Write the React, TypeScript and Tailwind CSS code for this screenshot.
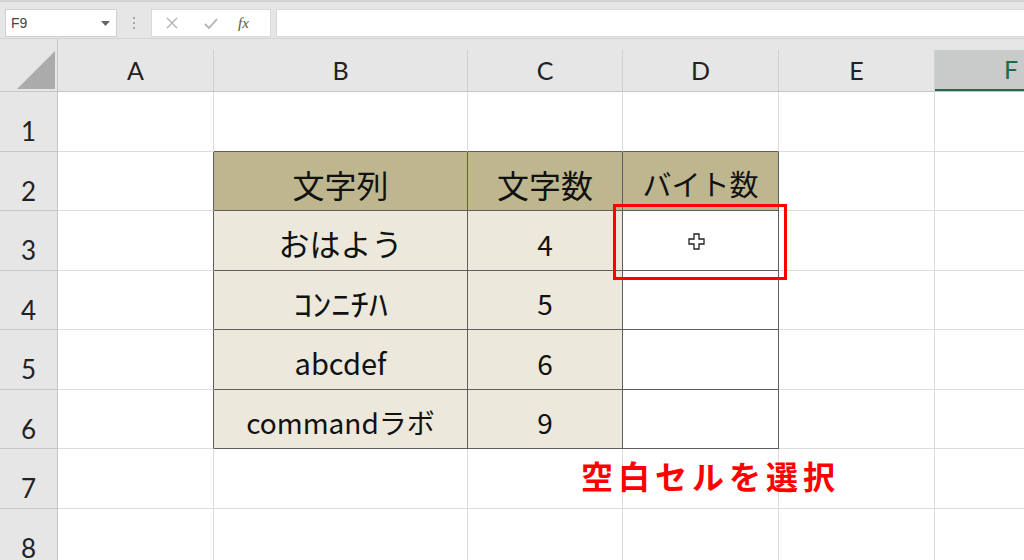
import React from "react";

const colWidths = [156, 254, 155, 156, 156, 152];
const colNames = ["A", "B", "C", "D", "E", "F"];
const rowHeights = [60, 59, 60, 59, 60, 59, 60, 60];

type Cell = { text?: string; kind?: "head" | "body" | "white"; size?: string; wide?: boolean };

const table: Record<string, Cell> = {
  "2-1": { text: "文字列", kind: "head", size: "text-[32px]" },
  "2-2": { text: "文字数", kind: "head", size: "text-[32px]" },
  "2-3": { text: "バイト数", kind: "head", size: "text-[29px]" },
  "3-1": { text: "おはよう", kind: "body", size: "text-[31px]" },
  "3-2": { text: "4", kind: "body" },
  "3-3": { kind: "white" },
  "4-1": { text: "ｺﾝﾆﾁﾊ", kind: "body", size: "text-[31px]", wide: true },
  "4-2": { text: "5", kind: "body" },
  "4-3": { kind: "white" },
  "5-1": { text: "abcdef", kind: "body", size: "text-[29px]" },
  "5-2": { text: "6", kind: "body" },
  "5-3": { kind: "white" },
  "6-1": { text: "commandラボ", kind: "body" },
  "6-2": { text: "9", kind: "body" },
  "6-3": { kind: "white" },
};

export default function App() {
  const font = { fontFamily: '"Noto Sans CJK JP", "Noto Sans", sans-serif' };
  return (
    <div className="relative w-[1024px] h-[560px] overflow-hidden bg-white" style={font}>
      {/* top strip */}
      <div className="h-[2px] bg-[#d2d2d2]" />
      {/* formula bar */}
      <div className="flex items-start pt-[7px] h-[37px] bg-[#e6e6e6] border-b border-[#d4d4d4]">
        <div className="ml-[5px] w-[112px] h-[28px] bg-white border border-[#d0d0d0] flex items-center justify-between pl-[5px] pr-[6px]">
          <span className="text-[14px] text-[#444]" style={{ fontFamily: '"Liberation Sans", sans-serif' }}>F9</span>
          <svg width="9" height="5" viewBox="0 0 9 5"><path d="M0 0 L9 0 L4.5 5 Z" fill="#666" /></svg>
        </div>
        <div className="w-[34px] h-[28px] flex flex-col items-center justify-center gap-[3px]">
          <div className="w-[2px] h-[2px] bg-[#a6a6a6]" />
          <div className="w-[2px] h-[2px] bg-[#a6a6a6]" />
          <div className="w-[2px] h-[2px] bg-[#a6a6a6]" />
        </div>
        <div className="w-[120px] h-[28px] bg-white border border-[#d8d8d8] flex items-center">
          <svg className="ml-[14px]" width="12" height="12" viewBox="0 0 12 12"><path d="M1 1 L11 11 M11 1 L1 11" stroke="#b3b3b3" strokeWidth="1.4" /></svg>
          <svg className="ml-[26px]" width="14" height="11" viewBox="0 0 14 11"><path d="M1 6 L5 10 L13 1" stroke="#b3b3b3" strokeWidth="1.8" fill="none" /></svg>
          <span className="ml-[20px] text-[15px] italic text-[#555]" style={{ fontFamily: '"Liberation Serif", serif' }}>fx</span>
        </div>
        <div className="ml-[5px] flex-1 h-[28px] bg-white border-l border-y border-[#d8d8d8]" />
      </div>
      {/* column header */}
      <div className="flex h-[53px] bg-[#e6e6e6] border-b border-[#c6c6c6]">
        <div className="w-[58px] shrink-0 h-full relative border-r border-[#c6c6c6]">
          <svg className="absolute right-[2px] bottom-[2px]" width="38" height="38" viewBox="0 0 38 38"><path d="M38 0 L38 38 L0 38 Z" fill="#ababab" /></svg>
        </div>
        {colNames.map((c, i) => (
          <div
            key={c}
            className={
              c === "F"
                ? "shrink-0 mt-[11px] flex items-center justify-center bg-[#c9cbca] border-b-2 border-[#1f6b45] text-[#1f6b45] text-[25px]"
                : "shrink-0 mt-[11px] flex items-center justify-center border-r border-[#d0d0d0] text-[#222] text-[25px]"
            }
            style={{ width: colWidths[i], fontFamily: 'Lato, "Noto Sans", sans-serif' }}
          >
            {c}
          </div>
        ))}
      </div>
      {/* rows */}
      {rowHeights.map((h, r) => {
        const row = r + 1;
        return (
          <div key={row} className="flex" style={{ height: h }}>
            <div
              className="w-[58px] shrink-0 bg-[#e6e6e6] border-r border-b border-[#c6c6c6] flex items-center justify-center pt-[20px] text-[26px] text-[#222]"
              style={{ fontFamily: 'Lato, "Noto Sans", sans-serif' }}
            >
              {row}
            </div>
            {colWidths.map((w, c) => {
              const cell = table[`${row}-${c}`];
              const inTable = row >= 2 && row <= 6;
              const darkRight = inTable && c >= 0 && c <= 3;
              const darkBottom = row >= 1 && row <= 6 && c >= 1 && c <= 3;
              const bg =
                cell?.kind === "head"
                  ? "bg-[#bdb68f]"
                  : cell?.kind === "body"
                  ? "bg-[#ece8dc]"
                  : "bg-white";
              return (
                <div
                  key={c}
                  className={`shrink-0 flex items-center justify-center pt-[6px] ${cell?.size ?? "text-[28px]"} text-[#111] border-r border-b ${bg} ${
                    darkRight ? "border-r-[#5e5e5e]" : "border-r-[#dcdcdc]"
                  } ${darkBottom ? "border-b-[#5e5e5e]" : "border-b-[#dcdcdc]"}`}
                  style={{ width: w }}
                >
                  {cell?.text && (
                    <span className={cell.wide ? "inline-block scale-x-[1.22]" : ""}>{cell.text}</span>
                  )}
                </div>
              );
            })}
          </div>
        );
      })}
      {/* selection box */}
      <div className="absolute left-[613px] top-[204px] w-[174px] h-[76px] border-[3px] border-[#ff0000]" />
      {/* cursor */}
      <svg className="absolute left-[688px] top-[233px]" width="18" height="17" viewBox="0 0 18 17">
        <path d="M6 1 H11 V6 H16 V11 H11 V16 H6 V11 H1 V6 H6 Z" fill="#fff" stroke="#222" strokeWidth="1.3" />
      </svg>
      {/* annotation */}
      <div className="absolute left-[581px] top-[459px] text-[32px] font-bold text-[#ff0000] tracking-[5px] leading-none" style={font}>
        空白セルを選択
      </div>
    </div>
  );
}
